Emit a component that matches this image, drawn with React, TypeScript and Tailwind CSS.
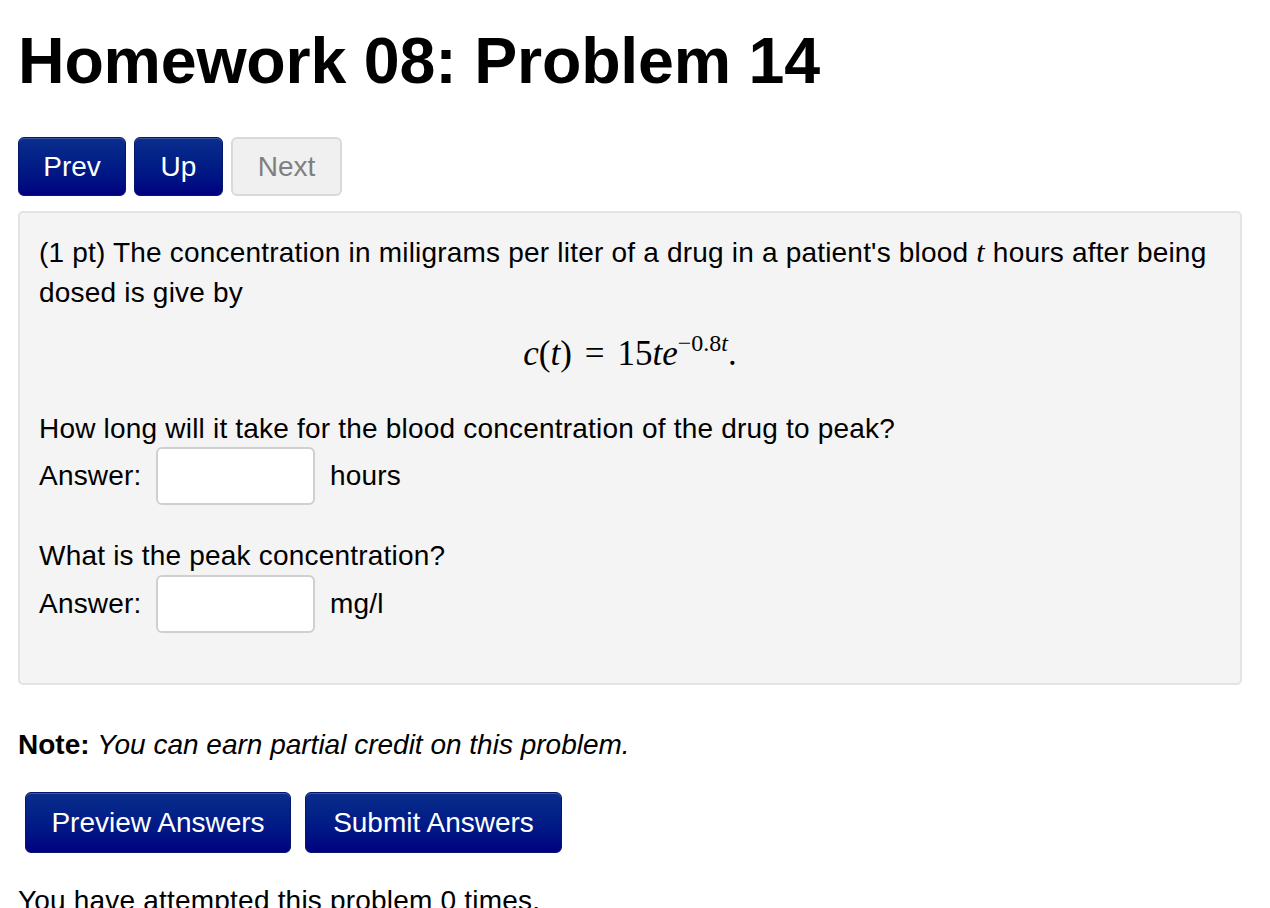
import React from "react";

const navBtn =
  "h-[59px] rounded-[6px] border border-[#06166a] bg-gradient-to-b from-[#0b2d8c] to-[#000080] text-white text-[28px] shadow-[inset_0_1px_0_rgba(255,255,255,0.2)]";

export default function App() {
  return (
    <div className="bg-white text-black font-['Liberation_Sans',Arial,sans-serif] px-[18px] overflow-hidden h-[908px]">
      <h1 className="pt-[22px] text-[64.5px] font-bold leading-[78px] tracking-[-0.2px]">
        Homework 08: Problem 14
      </h1>
      <div className="mt-[37px] flex gap-[8px]">
        <button className={navBtn + " w-[108px]"}>Prev</button>
        <button className={navBtn + " w-[89px]"}>Up</button>
        <button className="h-[59px] w-[111px] rounded-[6px] border-2 border-[#d9d9d9] bg-[#f0f0f0] text-[#7f7f7f] text-[28px]">
          Next
        </button>
      </div>
      <div className="mt-[15px] w-[1224px] h-[474px] rounded-[5px] border-2 border-[#e3e3e3] bg-[#f4f4f4] px-[19px] pt-[19px] text-[28px] leading-[40px] tracking-[0.2px]">
        <p>
          (1 pt) The concentration in miligrams per liter of a drug in a patient's blood{" "}
          <span className="font-['Liberation_Serif',serif] italic text-[30px]">t</span> hours after being
          dosed is give by
        </p>
        <div className="mt-[17px] flex justify-center font-['Liberation_Serif','Times_New_Roman',serif] text-[35px] leading-[48px] tracking-normal">
          <span>
            <i>c</i>(<i>t</i>)<span className="mx-[13px]">=</span>15<i>te</i>
            <sup className="text-[24px] relative top-[-14px]">
              −0.8<i>t</i>
            </sup>
            .
          </span>
        </div>
        <p className="mt-[31px]">How long will it take for the blood concentration of the drug to peak?</p>
        <div className="mt-[-2px] flex items-center">
          <span className="w-[117px]">Answer:</span>
          <div className="h-[58px] w-[159px] rounded-[6px] border-2 border-[#cfcfcf] bg-white" />
          <span className="ml-[15px]">hours</span>
        </div>
        <p className="mt-[31px]">What is the peak concentration?</p>
        <div className="mt-[-1px] flex items-center">
          <span className="w-[117px]">Answer:</span>
          <div className="h-[58px] w-[159px] rounded-[6px] border-2 border-[#cfcfcf] bg-white" />
          <span className="ml-[15px]">mg/l</span>
        </div>
      </div>
      <p className="mt-[40px] text-[28px] leading-[40px]">
        <b>Note:</b> <i>You can earn partial credit on this problem.</i>
      </p>
      <div className="mt-[27px] ml-[7px] flex gap-[14px]">
        <button className={navBtn + " w-[266px] h-[61px]"}>Preview Answers</button>
        <button className={navBtn + " w-[257px] h-[61px]"}>Submit Answers</button>
      </div>
      <p className="mt-[28px] text-[28px] leading-[40px] tracking-[0.2px]">You have attempted this problem 0 times.</p>
    </div>
  );
}
